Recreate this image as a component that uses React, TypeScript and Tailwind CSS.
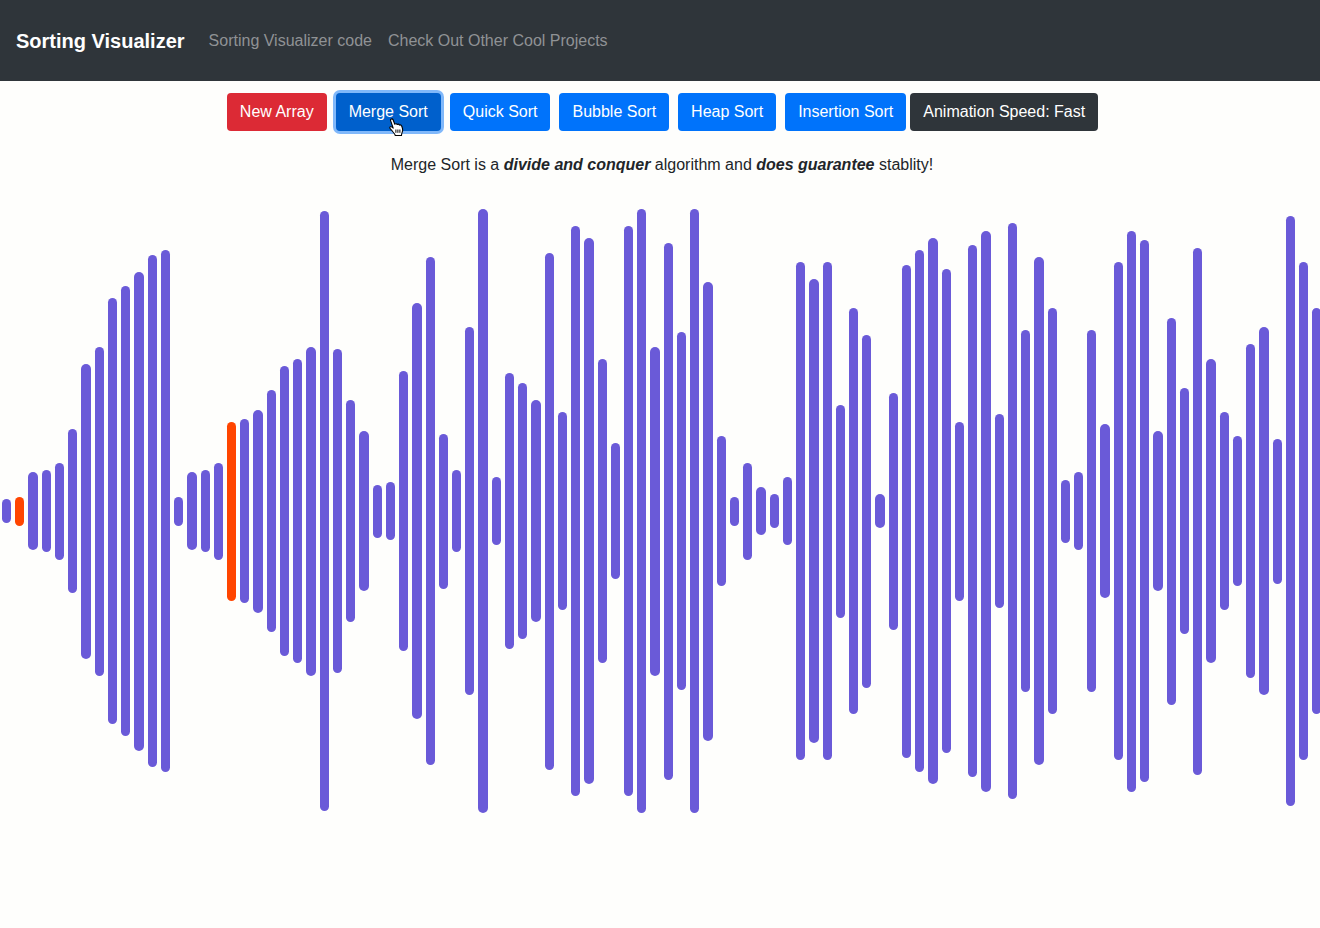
const heights: number[] = [
  24, 29, 78, 82, 97, 164, 295, 329, 426, 450, 479, 512, 522, 29, 78, 82, 97, 179, 184, 203,
  242, 290, 304, 329, 600, 324, 222, 160, 53, 58, 280, 416, 508, 155, 82, 368, 604, 68, 276, 256,
  222, 517, 198, 570, 546, 304, 136, 570, 604, 329, 537, 358, 604, 459, 150, 29, 97, 48, 34, 68,
  498, 464, 498, 213, 406, 353, 34, 237, 493, 522, 546, 484, 179, 532, 561, 194, 576, 362, 508, 406,
  63, 78, 362, 174, 498, 561, 542, 160, 387, 246, 527, 304, 198, 150, 334, 368, 145, 590, 498, 406,
];

const compared = [1, 17];

const sorts = ["Quick Sort", "Bubble Sort", "Heap Sort", "Insertion Sort"];

function HandCursor() {
  return (
    <svg
      className="pointer-events-none absolute left-[53px] top-[25px]"
      width="15"
      height="19"
      viewBox="0 0 15 19"
      aria-hidden="true"
    >
      <path
        d="M1.600 2.600C1.200 1 3.300.2 4.100 1.800L5.800 6.200C6.600 5.500 7.700 5.700 8.200 6.500C9 6 10 6.300 10.500 7.100C11.500 6.700 12.400 7.300 12.800 8.300C13.500 10 14 12 13.400 13.600C13 14.800 12.500 15.600 12.500 17.500H6.300C5.800 15.800 4.400 14.500 3.200 13C2.200 11.800 1 10.800.8 9.900C.6 8.700 2.200 8.300 3.200 9.200L4.200 10.100Z"
        fill="#fff"
        stroke="#000"
        strokeWidth="1.100"
        strokeLinejoin="round"
      />
      <path d="M6.900 11.500V14.800M8.900 11.500V14.800M10.900 11.500V14.800" stroke="#000" strokeWidth="1" fill="none" />
    </svg>
  );
}

export default function App() {
  return (
    <div className="min-h-screen overflow-hidden bg-[#fefefc] font-['Liberation_Sans',Arial,sans-serif] text-base text-[#212529]">
      <nav className="flex h-[81px] items-center bg-[#2f353a] px-4">
        <a href="#home" className="mr-4 text-xl font-bold text-white">
          Sorting Visualizer
        </a>
        <a href="#code" className="px-2 text-[#8f9295]">
          Sorting Visualizer code
        </a>
        <a href="#projects" className="px-2 text-[#8f9295]">
          Check Out Other Cool Projects
        </a>
      </nav>

      <main>
        <div className="flex flex-wrap justify-center gap-y-2 pl-[5px] pt-3">
          <button className="mr-[9px] h-[38px] rounded bg-[#dc2a35] px-[13px] text-white">New Array</button>
          <div className="relative mr-[9px]">
            <button className="h-[38px] rounded bg-[#0060cc] px-[13px] text-white ring-3 ring-[#80b8fa]">
              Merge Sort
            </button>
            <HandCursor />
          </div>
          {sorts.map((name) => (
            <button key={name} className="mr-[9px] h-[38px] rounded bg-[#0073fb] px-[13px] text-white nth-last-2:mr-1">
              {name}
            </button>
          ))}
          <button className="h-[38px] rounded bg-[#2f353a] px-[13px] text-white">Animation Speed: Fast</button>
        </div>

        <p className="pl-1 pt-[22px] text-center leading-6">
          Merge Sort is a <b><i>divide and conquer</i></b> algorithm and <b><i>does guarantee</i></b> stablity!
        </p>

        <div className="-mr-1 mt-8 flex items-center">
          {heights.map((height, index) => (
            <div key={index} className="min-w-0 flex-1 px-[2px]">
              <div
                className={compared.includes(index) ? "rounded-full bg-[#ff4500]" : "rounded-full bg-[#6a5ad8]"}
                style={{ height }}
              />
            </div>
          ))}
        </div>
      </main>
    </div>
  );
}
